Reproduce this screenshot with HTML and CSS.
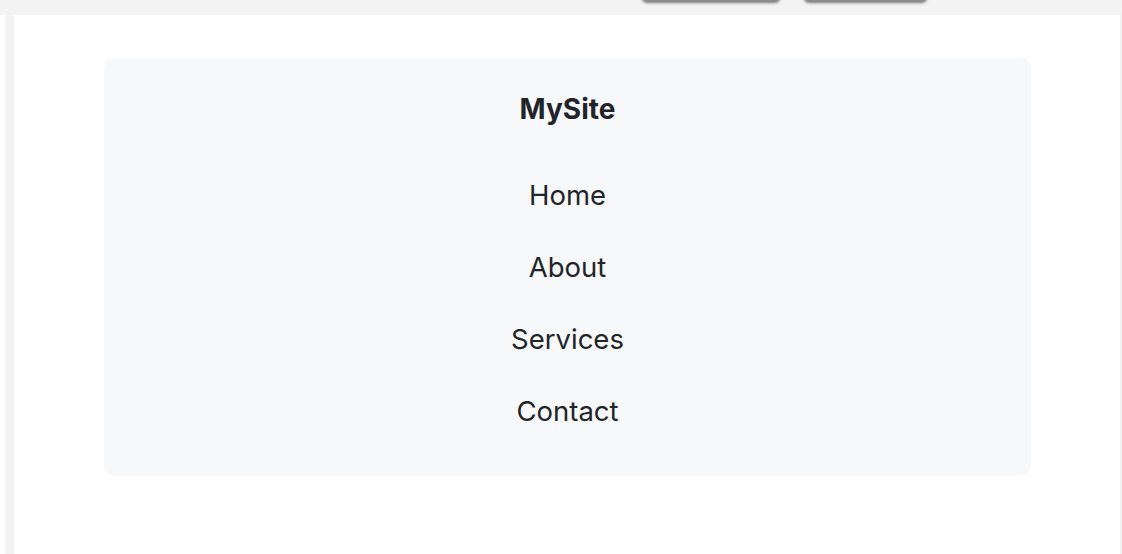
FILE: index.html
```html
<!DOCTYPE html>
<html>
<head>
<meta charset="utf-8">
<link rel="stylesheet" href="styles.css">
</head>
<body>
<div class="topbar">
  <div class="tb-btn tb-btn-1"></div>
  <div class="tb-btn tb-btn-2"></div>
</div>
<div class="frame">
  <div class="strip"></div>
  <main class="content">
    <nav class="card">
      <div class="brand">MySite</div>
      <ul class="links">
        <li>Home</li>
        <li>About</li>
        <li>Services</li>
        <li>Contact</li>
      </ul>
    </nav>
  </main>
</div>
</body>
</html>
```

FILE: styles.css
```css
* { box-sizing: border-box; }
html, body { margin: 0; padding: 0; }
body {
  width: 1122px;
  height: 554px;
  overflow: hidden;
  background: #fff;
  font-family: Inter, "Noto Sans", sans-serif;
  color: #212529;
}
.topbar {
  height: 15px;
  background: #f3f3f3;
  display: flex;
  padding-left: 643px;
  gap: 26px;
}
.tb-btn {
  height: 20px;
  margin-top: -19px;
  background: #8a8a8a;
  border-radius: 4px;
  box-shadow: 0 1px 3px 1px rgba(0,0,0,0.5);
}
.tb-btn-1 { width: 136px; }
.tb-btn-2 { width: 121px; }
.frame {
  display: flex;
  height: 539px;
}
.strip {
  width: 14px;
  border-left: 5px solid #fff;
  background: #f3f3f3;
}
.content {
  flex: 1;
  background: #fff;
  border-right: 2px solid #f1f1f1;
  padding: 43px 89px 0 90px;
}
.card {
  background: #f7f8fa;
  border-radius: 10px;
  height: 417px;
  padding-top: 34px;
  text-align: center;
}
.brand {
  font-size: 28px;
  font-weight: 700;
  line-height: 34px;
}
.links {
  list-style: none;
  margin: 54px 0 0;
  padding: 0;
  display: flex;
  flex-direction: column;
  gap: 42px;
}
.links li {
  font-size: 27.5px;
  line-height: 30px;
}
```
